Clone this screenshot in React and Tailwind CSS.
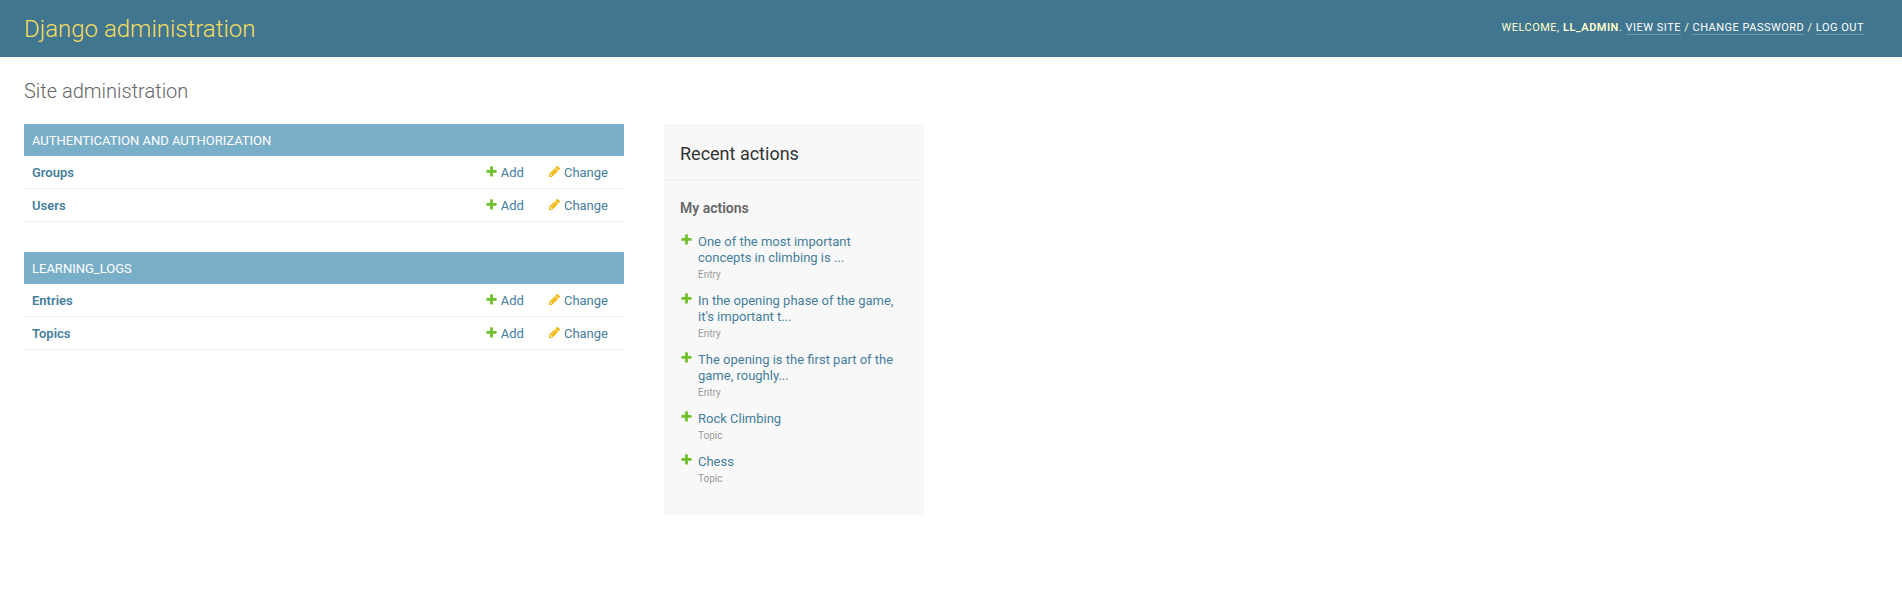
const PLUS = 'M1600 796v192q0 40-28 68t-68 28h-416v416q0 40-28 68t-68 28h-192q-40 0-68-28t-28-68v-416h-416q-40 0-68-28t-28-68v-192q0-40 28-68t68-28h416v-416q0-40 28-68t68-28h192q40 0 68 28t28 68v416h416q40 0 68 28t28 68z'
const PENCIL = 'M491 1536l91-91-235-235-91 91v107h128v128h107zm523-928q0-22-22-22-10 0-17 7l-542 542q-7 7-7 17 0 22 22 22 10 0 17-7l542-542q7-7 7-17zm-54-192l416 416-832 832h-416v-416zm683 96q0 53-37 90l-166 166-416-416 166-165q36-38 90-38 53 0 91 38l235 234q37 39 37 91z'

const modules = [
  { name: 'Authentication and Authorization', rows: ['Groups', 'Users'] },
  { name: 'Learning_Logs', rows: ['Entries', 'Topics'] },
]

const actions = [
  { title: 'One of the most important concepts in climbing is ...', type: 'Entry' },
  { title: "In the opening phase of the game, it's important t...", type: 'Entry' },
  { title: 'The opening is the first part of the game, roughly...', type: 'Entry' },
  { title: 'Rock Climbing', type: 'Topic' },
  { title: 'Chess', type: 'Topic' },
]

function Icon({ d, className }) {
  return (
    <svg viewBox="0 0 1792 1792" className={`h-[13px] w-[13px] shrink-0 ${className}`} aria-hidden="true">
      <path d={d} fill="currentColor" />
    </svg>
  )
}

function Module({ module }) {
  return (
    <section className="mb-[30px]">
      <h2 className="flex h-[32px] items-center bg-[#79aec8] px-2 pt-[1px] text-[13px] font-normal uppercase text-white">
        {module.name}
      </h2>
      {module.rows.map((row) => (
        <div key={row} className="flex h-[33px] items-center border-b border-[#eeeeee] pt-[1px] pr-4 pl-2 text-[13px] text-[#447e9b]">
          <a className="flex-1 font-semibold">{row}</a>
          <a className="flex items-center gap-[3px]">
            <Icon d={PLUS} className="-mt-[2px] text-[#70bf2b]" />
            Add
          </a>
          <a className="ml-6 flex items-center gap-[3px]">
            <Icon d={PENCIL} className="-mt-[2px] text-[#efb80b]" />
            Change
          </a>
        </div>
      ))}
    </section>
  )
}

function RecentActions() {
  return (
    <aside className="h-[391px] w-[260px] shrink-0 bg-[#f8f8f8]">
      <h2 className="border-b border-[#eeeeee] px-4 pt-[18px] pb-[14px] text-[18px] leading-[24px] font-normal text-[#333333]">
        Recent actions
      </h2>
      <div className="pt-[18px] pr-[25px] pl-4">
        <h3 className="text-[14px] leading-[18px] font-semibold text-[#666666]">My actions</h3>
        <ul className="mt-[17px] flex flex-col gap-[11px]">
          {actions.map((action) => (
            <li key={action.title} className="flex gap-[5px]">
              <Icon d={PLUS} className="-mt-[1px] text-[#70bf2b]" />
              <div className="min-w-0">
                <a className="block text-[13px] leading-[16px] text-[#447e9b]">{action.title}</a>
                <span className="mt-[2px] block text-[10px] leading-[14px] text-[#999999]">{action.type}</span>
              </div>
            </li>
          ))}
        </ul>
      </div>
    </aside>
  )
}

export default function App() {
  return (
    <div className="min-h-[589px] bg-white font-['Roboto',sans-serif]">
      <header className="flex h-[57px] items-center justify-between bg-[#417690] pr-[38px] pl-6">
        <h1 className="pt-[1px] text-[24px] font-light text-[#f5dd5d]">Django administration</h1>
        <div className="text-[11px] tracking-[0.5px] text-[#ffffcc] uppercase">
          Welcome, <strong className="font-semibold">ll_admin</strong>.{' '}
          <a className="border-b border-white/25 text-[#ffffff]">View site</a> /{' '}
          <a className="border-b border-white/25 text-[#ffffff]">Change password</a> /{' '}
          <a className="border-b border-white/25 text-[#ffffff]">Log out</a>
        </div>
      </header>
      <main className="px-6 pt-[20px]">
        <h1 className="mb-[19px] text-[20px] leading-[28px] font-light text-[#666666]">Site administration</h1>
        <div className="flex items-start gap-10">
          <div className="w-[600px] shrink-0">
            {modules.map((module) => (
              <Module key={module.name} module={module} />
            ))}
          </div>
          <RecentActions />
        </div>
      </main>
    </div>
  )
}
